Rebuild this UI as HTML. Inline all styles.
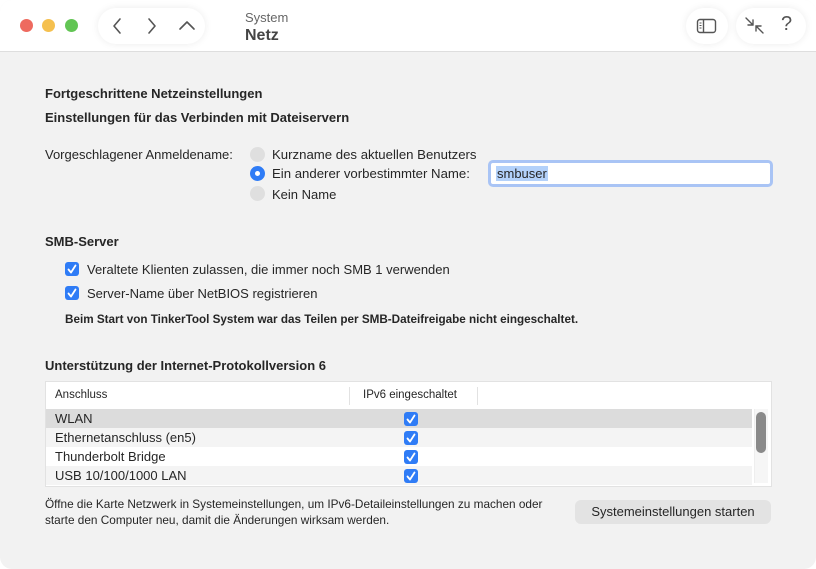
<!DOCTYPE html>
<html><head><meta charset="utf-8"><style>
*{margin:0;padding:0;box-sizing:border-box}
body{width:816px;height:569px;background:#fff;font-family:"Liberation Sans",sans-serif;font-size:13px;color:#262626;position:relative;overflow:hidden}
.a{position:absolute;white-space:nowrap}
.win{position:absolute;left:0;top:0;width:816px;height:569px;border-radius:12px;background:#f2f2f2;overflow:hidden}
.tb{position:absolute;left:0;top:0;width:816px;height:52px;background:#fff;border-bottom:1px solid #dedede}
.dot{position:absolute;top:19px;width:13px;height:13px;border-radius:50%}
.pill{position:absolute;top:8px;height:36px;background:#fff;border-radius:18px;box-shadow:0 0 8px rgba(0,0,0,.08)}
.b{font-weight:bold}
.cb{position:absolute;width:14px;height:14px;border-radius:3px;background:#2f7cf6}
.cb svg{position:absolute;left:2px;top:2px}
.rad{position:absolute;width:15px;height:15px;border-radius:50%;background:#dfdfdf}
</style></head><body>
<div class="win">
<div class="tb">
<div class="dot" style="left:20px;background:#ee6a5f"></div>
<div class="dot" style="left:42px;background:#f5c04f"></div>
<div class="dot" style="left:65px;background:#62c554"></div>
<div class="pill" style="left:98px;width:107px"></div>
<svg class="a" style="left:108px;top:16px" width="90" height="20" fill="none" stroke="#555" stroke-width="1.6" stroke-linecap="round" stroke-linejoin="round"><path d="M12 3 L6 10 L12 17"/><path d="M41 3 L47 10 L41 17"/><path d="M72 13 L79 6 L86 13"/></svg>
<div class="a" style="left:245px;top:10px;font-size:13px;color:#666">System</div>
<div class="a b" style="left:245px;top:27px;font-size:16px;color:#444">Netz</div>
<div class="pill" style="left:686px;width:42px"></div>
<svg class="a" style="left:696px;top:17px" width="22" height="18" fill="none" stroke="#555" stroke-width="1.4"><rect x="1.5" y="2.5" width="18" height="13" rx="2.5"/><path d="M7.5 2.5 V15.5"/><path d="M3.5 6h2M3.5 8.5h2M3.5 11h2" stroke-width="1"/></svg>
<div class="pill" style="left:736px;width:70px"></div>
<svg class="a" style="left:744px;top:16px" width="22" height="20" fill="none" stroke="#555" stroke-width="1.4" stroke-linecap="round"><path d="M2 2 L9 9 M9 4 V9 H4"/><path d="M19 17 L12 10 M12 15 V10 H17"/></svg>
<div class="a" style="left:781px;top:13px;font-size:20px;color:#555">?</div>
</div>

<div class="a b" style="left:45px;top:86px">Fortgeschrittene Netzeinstellungen</div>
<div class="a b" style="left:45px;top:110px">Einstellungen für das Verbinden mit Dateiservern</div>
<div class="a" style="left:45px;top:147px">Vorgeschlagener Anmeldename:</div>
<div class="rad" style="left:250px;top:147px"></div>
<div class="a" style="left:272px;top:147px;font-size:13.2px">Kurzname des aktuellen Benutzers</div>
<div class="rad" style="left:250px;top:166px;background:#2f7cf6"><div style="position:absolute;left:5px;top:5px;width:5px;height:5px;border-radius:50%;background:#fff"></div></div>
<div class="a" style="left:272px;top:166px;font-size:13.2px">Ein anderer vorbestimmter Name:</div>
<div class="rad" style="left:250px;top:186px"></div>
<div class="a" style="left:272px;top:187px">Kein Name</div>
<div class="a" style="left:488px;top:160px;width:285px;height:27px;border:3px solid #a9c4f5;border-radius:5px;background:#fff"></div>
<div class="a" style="left:496px;top:166px;background:#b3d1fa;padding:0 1px">smbuser</div>

<div class="a b" style="left:45px;top:234px">SMB-Server</div>
<div class="cb" style="left:65px;top:262px"><svg width="10" height="10" fill="none" stroke="#fff" stroke-width="1.8" stroke-linecap="round" stroke-linejoin="round"><path d="M1.5 5.5 L4 8.5 L8.5 1.5"/></svg></div>
<div class="a" style="left:87px;top:262px">Veraltete Klienten zulassen, die immer noch SMB 1 verwenden</div>
<div class="cb" style="left:65px;top:286px"><svg width="10" height="10" fill="none" stroke="#fff" stroke-width="1.8" stroke-linecap="round" stroke-linejoin="round"><path d="M1.5 5.5 L4 8.5 L8.5 1.5"/></svg></div>
<div class="a" style="left:87px;top:286px">Server-Name über NetBIOS registrieren</div>
<div class="a b" style="left:65px;top:313px;font-size:11.7px">Beim Start von TinkerTool System war das Teilen per SMB-Dateifreigabe nicht eingeschaltet.</div>

<div class="a b" style="left:45px;top:358px">Unterstützung der Internet-Protokollversion 6</div>
<div class="a" style="left:45px;top:381px;width:727px;height:106px;background:#fff;border:1px solid #e2e2e2"></div>
<div class="a" style="left:55px;top:389px;font-size:11.5px">Anschluss</div>
<div class="a" style="left:349px;top:387px;width:1px;height:18px;background:#e2e2e2"></div>
<div class="a" style="left:363px;top:389px;font-size:11.5px">IPv6 eingeschaltet</div>
<div class="a" style="left:477px;top:387px;width:1px;height:18px;background:#e2e2e2"></div>
<div class="a" style="left:46px;top:409px;width:706px;height:19px;background:#dcdcdc"></div>
<div class="a" style="left:46px;top:428px;width:706px;height:19px;background:#f4f4f4"></div>
<div class="a" style="left:46px;top:466px;width:706px;height:19px;background:#f4f4f4"></div>
<div class="a" style="left:55px;top:411px">WLAN</div>
<div class="a" style="left:55px;top:430px">Ethernetanschluss (en5)</div>
<div class="a" style="left:55px;top:449px">Thunderbolt Bridge</div>
<div class="a" style="left:55px;top:468px">USB 10/100/1000 LAN</div>
<div class="cb" style="left:404px;top:412px"><svg width="10" height="10" fill="none" stroke="#fff" stroke-width="1.8" stroke-linecap="round" stroke-linejoin="round"><path d="M1.5 5.5 L4 8.5 L8.5 1.5"/></svg></div>
<div class="cb" style="left:404px;top:431px"><svg width="10" height="10" fill="none" stroke="#fff" stroke-width="1.8" stroke-linecap="round" stroke-linejoin="round"><path d="M1.5 5.5 L4 8.5 L8.5 1.5"/></svg></div>
<div class="cb" style="left:404px;top:450px"><svg width="10" height="10" fill="none" stroke="#fff" stroke-width="1.8" stroke-linecap="round" stroke-linejoin="round"><path d="M1.5 5.5 L4 8.5 L8.5 1.5"/></svg></div>
<div class="cb" style="left:404px;top:469px"><svg width="10" height="10" fill="none" stroke="#fff" stroke-width="1.8" stroke-linecap="round" stroke-linejoin="round"><path d="M1.5 5.5 L4 8.5 L8.5 1.5"/></svg></div>
<div class="a" style="left:754px;top:409px;width:14px;height:74px;background:#f6f6f6;border-left:1px solid #eee"></div>
<div class="a" style="left:756px;top:412px;width:10px;height:41px;border-radius:5px;background:#8a8a8a"></div>

<div class="a" style="left:45px;top:496px;font-size:11.8px;line-height:16px">Öffne die Karte Netzwerk in Systemeinstellungen, um IPv6-Detaileinstellungen zu machen oder<br>starte den Computer neu, damit die Änderungen wirksam werden.</div>
<div class="a" style="left:575px;top:500px;width:196px;height:24px;border-radius:6px;background:#e3e3e3;text-align:center;line-height:24px">Systemeinstellungen starten</div>
</div>
</body></html>
